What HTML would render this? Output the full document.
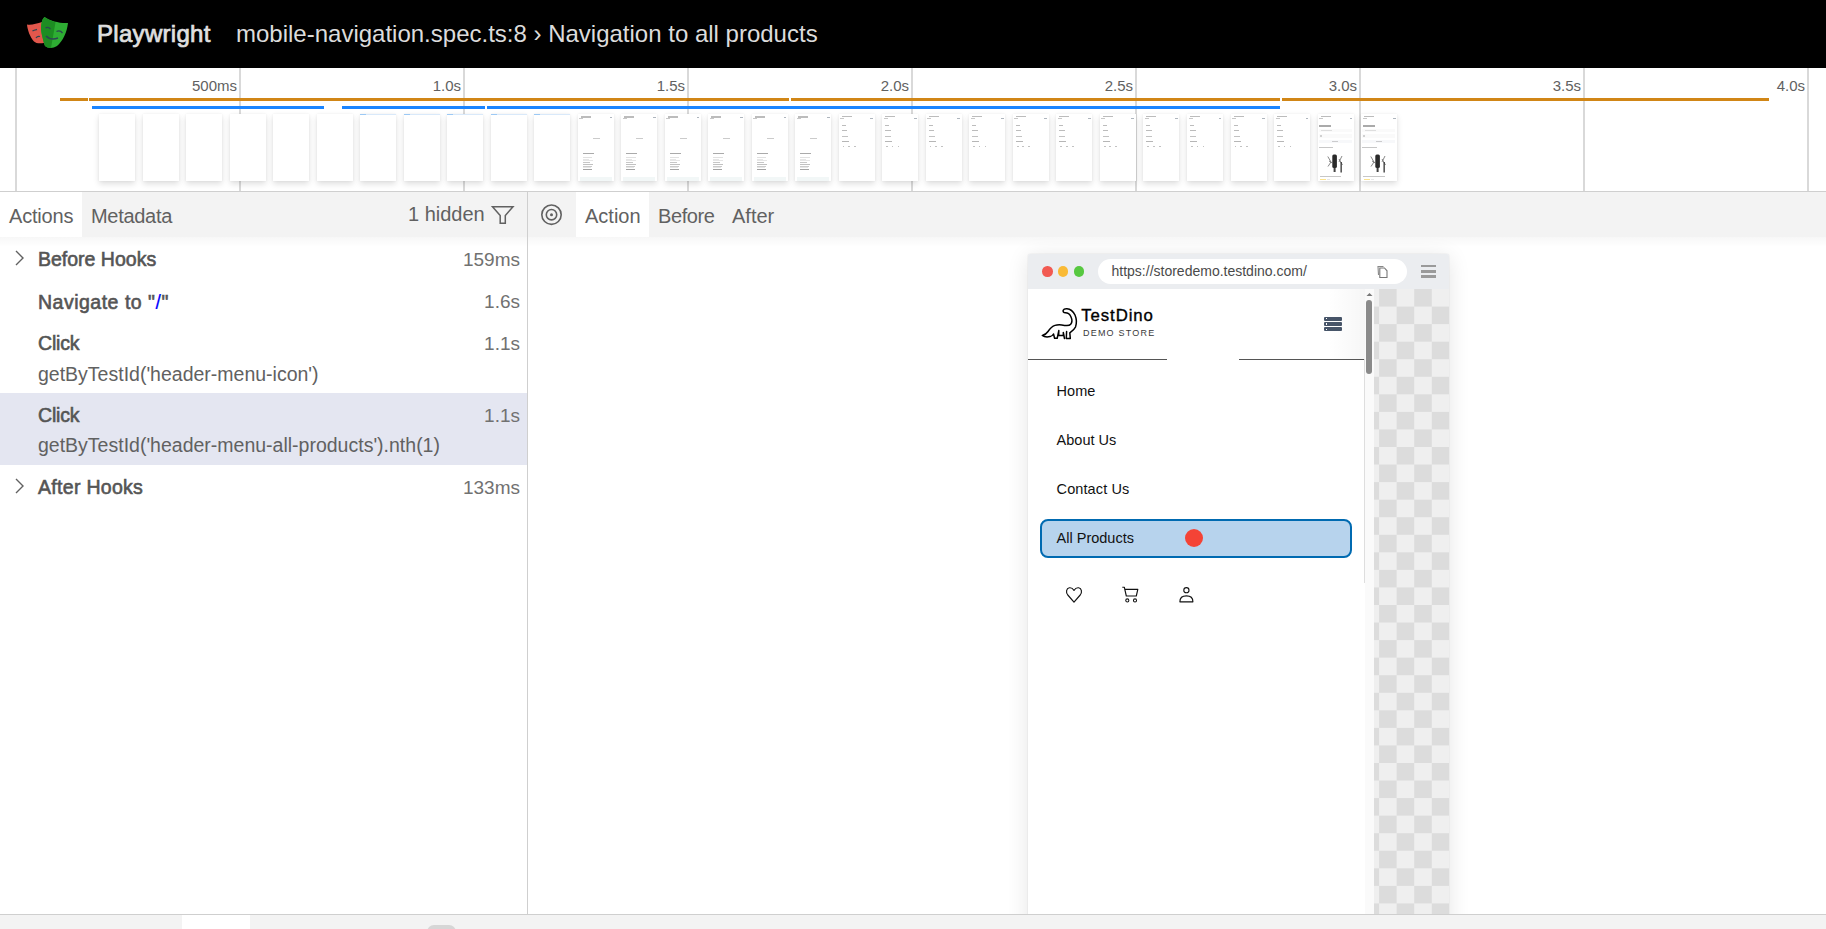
<!DOCTYPE html>
<html><head><meta charset="utf-8">
<style>
*{box-sizing:border-box;margin:0;padding:0}
html,body{width:1826px;height:929px;overflow:hidden;background:#fff;font-family:"Liberation Sans",sans-serif;color:#616161}
.a{position:absolute;white-space:pre;line-height:1}
#hdr{position:absolute;left:0;top:0;width:1826px;height:68px;background:#000}
#tl{position:absolute;left:0;top:68px;width:1826px;height:124px;background:#fff;border-bottom:1px solid #cfcfcf}
.gl{position:absolute;top:68px;width:2px;height:123px;background:#d9d9d9}
.lbl{position:absolute;font-size:15px;line-height:1;top:78px;color:#616161;text-align:right;width:60px}
.ob{position:absolute;top:98px;height:3px;background:#d18616}
.bb{position:absolute;top:106px;height:3px;background:#1a85ff}
.fr{position:absolute;top:114px;width:36px;height:67px;background:#fff;box-shadow:0 3px 6px rgba(0,0,0,.13),0 0 2px rgba(0,0,0,.06);overflow:hidden}
.fr i{position:absolute;display:block;background:#9a9a9a;filter:opacity(.55)}
.tabbar{position:absolute;top:192px;height:45px;background:#f3f3f3}
.tabtxt{position:absolute;font-size:20px;line-height:1;top:206px;color:#616161}
.row{position:absolute;left:0;width:527px}
.t{position:absolute;left:38px;font-size:19.5px;font-weight:400;line-height:1;color:#555;-webkit-text-stroke:0.6px #555}
.s{position:absolute;left:38px;font-size:19.5px;line-height:1;color:#616161}
.d{position:absolute;right:7px;font-size:19px;line-height:1;color:#717171}
.mi{position:absolute;left:1056px;font-size:14.5px;line-height:1;color:#111}
</style></head>
<body>
<!-- HEADER -->
<div id="hdr">
  <svg style="position:absolute;left:0;top:0" width="80" height="68" viewBox="0 0 80 68">
    <path d="M27,24.5 C31,25.5 37,23.5 42,22 L44,43 C40,43.5 36,43.5 34,41.5 C30,37 27.5,30 27,24.5 Z" fill="#e2574c"/>
    <path d="M44.5,17 C50,21 60,23.5 68,23 C67,32 63,41 57,46 C53,48.5 48,48.5 45,46 C43,40 41,32 41,29 C41,24 42,19 44.5,17 Z" fill="#2ead33"/>
    <path d="M44.5,17 C47,19 52,21 55.5,22.3 L51,48 C48.5,48 46.5,47.2 45,46 C43,40 41,32 41,29 C41,24 42,19 44.5,17 Z" fill="#1d8d22"/>
    <path d="M32.5,31 C34,30 35.5,29.8 37,29.5" stroke="#2d4552" stroke-width="1.3" fill="none"/>
    <path d="M36,38 C37,36.5 38.5,36 40,36.5" stroke="#2d4552" stroke-width="1.3" fill="none"/>
    <path d="M45.5,28 C47,27 49,27.5 50.5,29" stroke="#2d4552" stroke-width="1.3" fill="none"/>
    <path d="M56.5,31.5 C58.5,30.5 61,31 62.5,33" stroke="#2d4552" stroke-width="1.3" fill="none"/>
    <path d="M46,36 C49,39 54,39.5 58,38" stroke="#2d4552" stroke-width="1.6" fill="none"/>
  </svg>
  <div class="a" style="left:97px;top:21.7px;font-size:24px;font-weight:400;color:#e0e0e0;letter-spacing:0.3px;-webkit-text-stroke:0.7px #e0e0e0">Playwright</div>
  <div class="a" style="left:236px;top:21.7px;font-size:24px;color:#dcdcdc">mobile-navigation.spec.ts:8 › Navigation to all products</div>
</div>

<!-- TIMELINE -->
<div id="tl"></div>
<div class="gl" style="left:15px"></div>
<div class="gl" style="left:239px"></div>
<div class="gl" style="left:463px"></div>
<div class="gl" style="left:687px"></div>
<div class="gl" style="left:911px"></div>
<div class="gl" style="left:1135px"></div>
<div class="gl" style="left:1359px"></div>
<div class="gl" style="left:1583px"></div>
<div class="gl" style="left:1807px"></div>
<div class="lbl" style="left:177px">500ms</div>
<div class="lbl" style="left:401px">1.0s</div>
<div class="lbl" style="left:625px">1.5s</div>
<div class="lbl" style="left:849px">2.0s</div>
<div class="lbl" style="left:1073px">2.5s</div>
<div class="lbl" style="left:1297px">3.0s</div>
<div class="lbl" style="left:1521px">3.5s</div>
<div class="lbl" style="left:1745px">4.0s</div>
<div class="ob" style="left:60px;width:28px"></div>
<div class="ob" style="left:89px;width:700px"></div>
<div class="ob" style="left:791px;width:489px"></div>
<div class="ob" style="left:1282px;width:487px"></div>
<div class="bb" style="left:92px;width:232px"></div>
<div class="bb" style="left:342px;width:143px"></div>
<div class="bb" style="left:487px;width:793px"></div>
<div id="frames"><div class="fr" style="left:99.00px"></div><div class="fr" style="left:142.52px"></div><div class="fr" style="left:186.04px"></div><div class="fr" style="left:229.56px"></div><div class="fr" style="left:273.08px"></div><div class="fr" style="left:316.60px"></div><div class="fr" style="left:360.12px"><i style="left:0px;top:0px;width:36px;height:0.8px;background:#b9d7f5;opacity:1"></i><i style="left:0px;top:0px;width:6px;height:0.8px;background:#6aaef0;opacity:1"></i></div><div class="fr" style="left:403.64px"><i style="left:0px;top:0px;width:36px;height:0.8px;background:#b9d7f5;opacity:1"></i><i style="left:0px;top:0px;width:6px;height:0.8px;background:#6aaef0;opacity:1"></i></div><div class="fr" style="left:447.16px"><i style="left:0px;top:0px;width:36px;height:0.8px;background:#b9d7f5;opacity:1"></i><i style="left:0px;top:0px;width:6px;height:0.8px;background:#6aaef0;opacity:1"></i></div><div class="fr" style="left:490.68px"><i style="left:0px;top:0px;width:36px;height:0.8px;background:#b9d7f5;opacity:1"></i><i style="left:0px;top:0px;width:6px;height:0.8px;background:#6aaef0;opacity:1"></i></div><div class="fr" style="left:534.20px"><i style="left:0px;top:0px;width:36px;height:0.8px;background:#b9d7f5;opacity:1"></i><i style="left:0px;top:0px;width:6px;height:0.8px;background:#6aaef0;opacity:1"></i></div><div class="fr" style="left:577.72px"><i style="left:3px;top:2.4px;width:10px;height:1.2px;background:#333;opacity:0.6"></i><i style="left:1.5px;top:3.8px;width:4px;height:1px;background:#333;opacity:0.5"></i><i style="left:32px;top:3.2px;width:2.6px;height:1.3px;background:#475569;opacity:0.8"></i><i style="left:15px;top:23.8px;width:7px;height:1px;background:#444;opacity:0.5"></i><i style="left:5px;top:39.4px;width:11px;height:1px;background:#222;opacity:0.7"></i><i style="left:5px;top:43.2px;width:9.5px;height:0.8px;background:#666;opacity:0.35"></i><i style="left:5px;top:45.2px;width:6px;height:0.7px;background:#666;opacity:0.3"></i><i style="left:5px;top:46.2px;width:10px;height:0.7px;background:#666;opacity:0.3"></i><i style="left:5px;top:47.9px;width:7px;height:0.8px;background:#333;opacity:0.5"></i><i style="left:5px;top:49.8px;width:10px;height:0.8px;background:#333;opacity:0.55"></i><i style="left:5px;top:51.7px;width:9px;height:0.8px;background:#333;opacity:0.45"></i><i style="left:5px;top:53.3px;width:8px;height:0.7px;background:#666;opacity:0.3"></i><i style="left:5px;top:55.4px;width:9px;height:0.9px;background:#111;opacity:0.7"></i><i style="left:2px;top:63px;width:32px;height:4px;background:#e8f1f1;opacity:1"></i></div><div class="fr" style="left:621.24px"><i style="left:3px;top:2.4px;width:10px;height:1.2px;background:#333;opacity:0.6"></i><i style="left:1.5px;top:3.8px;width:4px;height:1px;background:#333;opacity:0.5"></i><i style="left:32px;top:3.2px;width:2.6px;height:1.3px;background:#475569;opacity:0.8"></i><i style="left:15px;top:23.8px;width:7px;height:1px;background:#444;opacity:0.5"></i><i style="left:5px;top:39.4px;width:11px;height:1px;background:#222;opacity:0.7"></i><i style="left:5px;top:43.2px;width:9.5px;height:0.8px;background:#666;opacity:0.35"></i><i style="left:5px;top:45.2px;width:6px;height:0.7px;background:#666;opacity:0.3"></i><i style="left:5px;top:46.2px;width:10px;height:0.7px;background:#666;opacity:0.3"></i><i style="left:5px;top:47.9px;width:7px;height:0.8px;background:#333;opacity:0.5"></i><i style="left:5px;top:49.8px;width:10px;height:0.8px;background:#333;opacity:0.55"></i><i style="left:5px;top:51.7px;width:9px;height:0.8px;background:#333;opacity:0.45"></i><i style="left:5px;top:53.3px;width:8px;height:0.7px;background:#666;opacity:0.3"></i><i style="left:5px;top:55.4px;width:9px;height:0.9px;background:#111;opacity:0.7"></i><i style="left:2px;top:63px;width:32px;height:4px;background:#e8f1f1;opacity:1"></i></div><div class="fr" style="left:664.76px"><i style="left:3px;top:2.4px;width:10px;height:1.2px;background:#333;opacity:0.6"></i><i style="left:1.5px;top:3.8px;width:4px;height:1px;background:#333;opacity:0.5"></i><i style="left:32px;top:3.2px;width:2.6px;height:1.3px;background:#475569;opacity:0.8"></i><i style="left:15px;top:23.8px;width:7px;height:1px;background:#444;opacity:0.5"></i><i style="left:5px;top:39.4px;width:11px;height:1px;background:#222;opacity:0.7"></i><i style="left:5px;top:43.2px;width:9.5px;height:0.8px;background:#666;opacity:0.35"></i><i style="left:5px;top:45.2px;width:6px;height:0.7px;background:#666;opacity:0.3"></i><i style="left:5px;top:46.2px;width:10px;height:0.7px;background:#666;opacity:0.3"></i><i style="left:5px;top:47.9px;width:7px;height:0.8px;background:#333;opacity:0.5"></i><i style="left:5px;top:49.8px;width:10px;height:0.8px;background:#333;opacity:0.55"></i><i style="left:5px;top:51.7px;width:9px;height:0.8px;background:#333;opacity:0.45"></i><i style="left:5px;top:53.3px;width:8px;height:0.7px;background:#666;opacity:0.3"></i><i style="left:5px;top:55.4px;width:9px;height:0.9px;background:#111;opacity:0.7"></i><i style="left:2px;top:63px;width:32px;height:4px;background:#e8f1f1;opacity:1"></i></div><div class="fr" style="left:708.28px"><i style="left:3px;top:2.4px;width:10px;height:1.2px;background:#333;opacity:0.6"></i><i style="left:1.5px;top:3.8px;width:4px;height:1px;background:#333;opacity:0.5"></i><i style="left:32px;top:3.2px;width:2.6px;height:1.3px;background:#475569;opacity:0.8"></i><i style="left:15px;top:23.8px;width:7px;height:1px;background:#444;opacity:0.5"></i><i style="left:5px;top:39.4px;width:11px;height:1px;background:#222;opacity:0.7"></i><i style="left:5px;top:43.2px;width:9.5px;height:0.8px;background:#666;opacity:0.35"></i><i style="left:5px;top:45.2px;width:6px;height:0.7px;background:#666;opacity:0.3"></i><i style="left:5px;top:46.2px;width:10px;height:0.7px;background:#666;opacity:0.3"></i><i style="left:5px;top:47.9px;width:7px;height:0.8px;background:#333;opacity:0.5"></i><i style="left:5px;top:49.8px;width:10px;height:0.8px;background:#333;opacity:0.55"></i><i style="left:5px;top:51.7px;width:9px;height:0.8px;background:#333;opacity:0.45"></i><i style="left:5px;top:53.3px;width:8px;height:0.7px;background:#666;opacity:0.3"></i><i style="left:5px;top:55.4px;width:9px;height:0.9px;background:#111;opacity:0.7"></i><i style="left:2px;top:63px;width:32px;height:4px;background:#e8f1f1;opacity:1"></i></div><div class="fr" style="left:751.80px"><i style="left:3px;top:2.4px;width:10px;height:1.2px;background:#333;opacity:0.6"></i><i style="left:1.5px;top:3.8px;width:4px;height:1px;background:#333;opacity:0.5"></i><i style="left:32px;top:3.2px;width:2.6px;height:1.3px;background:#475569;opacity:0.8"></i><i style="left:15px;top:23.8px;width:7px;height:1px;background:#444;opacity:0.5"></i><i style="left:5px;top:39.4px;width:11px;height:1px;background:#222;opacity:0.7"></i><i style="left:5px;top:43.2px;width:9.5px;height:0.8px;background:#666;opacity:0.35"></i><i style="left:5px;top:45.2px;width:6px;height:0.7px;background:#666;opacity:0.3"></i><i style="left:5px;top:46.2px;width:10px;height:0.7px;background:#666;opacity:0.3"></i><i style="left:5px;top:47.9px;width:7px;height:0.8px;background:#333;opacity:0.5"></i><i style="left:5px;top:49.8px;width:10px;height:0.8px;background:#333;opacity:0.55"></i><i style="left:5px;top:51.7px;width:9px;height:0.8px;background:#333;opacity:0.45"></i><i style="left:5px;top:53.3px;width:8px;height:0.7px;background:#666;opacity:0.3"></i><i style="left:5px;top:55.4px;width:9px;height:0.9px;background:#111;opacity:0.7"></i><i style="left:2px;top:63px;width:32px;height:4px;background:#e8f1f1;opacity:1"></i></div><div class="fr" style="left:795.32px"><i style="left:3px;top:2.4px;width:10px;height:1.2px;background:#333;opacity:0.6"></i><i style="left:1.5px;top:3.8px;width:4px;height:1px;background:#333;opacity:0.5"></i><i style="left:32px;top:3.2px;width:2.6px;height:1.3px;background:#475569;opacity:0.8"></i><i style="left:15px;top:23.8px;width:7px;height:1px;background:#444;opacity:0.5"></i><i style="left:5px;top:39.4px;width:11px;height:1px;background:#222;opacity:0.7"></i><i style="left:5px;top:43.2px;width:9.5px;height:0.8px;background:#666;opacity:0.35"></i><i style="left:5px;top:45.2px;width:6px;height:0.7px;background:#666;opacity:0.3"></i><i style="left:5px;top:46.2px;width:10px;height:0.7px;background:#666;opacity:0.3"></i><i style="left:5px;top:47.9px;width:7px;height:0.8px;background:#333;opacity:0.5"></i><i style="left:5px;top:49.8px;width:10px;height:0.8px;background:#333;opacity:0.55"></i><i style="left:5px;top:51.7px;width:9px;height:0.8px;background:#333;opacity:0.45"></i><i style="left:5px;top:53.3px;width:8px;height:0.7px;background:#666;opacity:0.3"></i><i style="left:5px;top:55.4px;width:9px;height:0.9px;background:#111;opacity:0.7"></i><i style="left:2px;top:63px;width:32px;height:4px;background:#e8f1f1;opacity:1"></i></div><div class="fr" style="left:838.84px"><i style="left:3px;top:2.2px;width:10px;height:1.2px;background:#333;opacity:0.6"></i><i style="left:1.5px;top:3.6px;width:4px;height:1px;background:#333;opacity:0.5"></i><i style="left:31.5px;top:3.5px;width:2.8px;height:1.3px;background:#475569;opacity:0.8"></i><i style="left:3px;top:11px;width:4px;height:1px;background:#222;opacity:0.55"></i><i style="left:3px;top:16.3px;width:5.5px;height:1px;background:#222;opacity:0.55"></i><i style="left:3px;top:21.5px;width:6px;height:1px;background:#222;opacity:0.5"></i><i style="left:3px;top:26.7px;width:7px;height:1px;background:#222;opacity:0.6"></i><i style="left:4px;top:32px;width:1.6px;height:1.4px;background:#222;opacity:0.5"></i><i style="left:9.5px;top:32px;width:1.6px;height:1.4px;background:#222;opacity:0.5"></i><i style="left:15.5px;top:32px;width:1.6px;height:1.4px;background:#222;opacity:0.5"></i></div><div class="fr" style="left:882.36px"><i style="left:3px;top:2.2px;width:10px;height:1.2px;background:#333;opacity:0.6"></i><i style="left:1.5px;top:3.6px;width:4px;height:1px;background:#333;opacity:0.5"></i><i style="left:31.5px;top:3.5px;width:2.8px;height:1.3px;background:#475569;opacity:0.8"></i><i style="left:3px;top:11px;width:4px;height:1px;background:#222;opacity:0.55"></i><i style="left:3px;top:16.3px;width:5.5px;height:1px;background:#222;opacity:0.55"></i><i style="left:3px;top:21.5px;width:6px;height:1px;background:#222;opacity:0.5"></i><i style="left:3px;top:26.7px;width:7px;height:1px;background:#222;opacity:0.6"></i><i style="left:4px;top:32px;width:1.6px;height:1.4px;background:#222;opacity:0.5"></i><i style="left:9.5px;top:32px;width:1.6px;height:1.4px;background:#222;opacity:0.5"></i><i style="left:15.5px;top:32px;width:1.6px;height:1.4px;background:#222;opacity:0.5"></i></div><div class="fr" style="left:925.88px"><i style="left:3px;top:2.2px;width:10px;height:1.2px;background:#333;opacity:0.6"></i><i style="left:1.5px;top:3.6px;width:4px;height:1px;background:#333;opacity:0.5"></i><i style="left:31.5px;top:3.5px;width:2.8px;height:1.3px;background:#475569;opacity:0.8"></i><i style="left:3px;top:11px;width:4px;height:1px;background:#222;opacity:0.55"></i><i style="left:3px;top:16.3px;width:5.5px;height:1px;background:#222;opacity:0.55"></i><i style="left:3px;top:21.5px;width:6px;height:1px;background:#222;opacity:0.5"></i><i style="left:3px;top:26.7px;width:7px;height:1px;background:#222;opacity:0.6"></i><i style="left:4px;top:32px;width:1.6px;height:1.4px;background:#222;opacity:0.5"></i><i style="left:9.5px;top:32px;width:1.6px;height:1.4px;background:#222;opacity:0.5"></i><i style="left:15.5px;top:32px;width:1.6px;height:1.4px;background:#222;opacity:0.5"></i></div><div class="fr" style="left:969.40px"><i style="left:3px;top:2.2px;width:10px;height:1.2px;background:#333;opacity:0.6"></i><i style="left:1.5px;top:3.6px;width:4px;height:1px;background:#333;opacity:0.5"></i><i style="left:31.5px;top:3.5px;width:2.8px;height:1.3px;background:#475569;opacity:0.8"></i><i style="left:3px;top:11px;width:4px;height:1px;background:#222;opacity:0.55"></i><i style="left:3px;top:16.3px;width:5.5px;height:1px;background:#222;opacity:0.55"></i><i style="left:3px;top:21.5px;width:6px;height:1px;background:#222;opacity:0.5"></i><i style="left:3px;top:26.7px;width:7px;height:1px;background:#222;opacity:0.6"></i><i style="left:4px;top:32px;width:1.6px;height:1.4px;background:#222;opacity:0.5"></i><i style="left:9.5px;top:32px;width:1.6px;height:1.4px;background:#222;opacity:0.5"></i><i style="left:15.5px;top:32px;width:1.6px;height:1.4px;background:#222;opacity:0.5"></i></div><div class="fr" style="left:1012.92px"><i style="left:3px;top:2.2px;width:10px;height:1.2px;background:#333;opacity:0.6"></i><i style="left:1.5px;top:3.6px;width:4px;height:1px;background:#333;opacity:0.5"></i><i style="left:31.5px;top:3.5px;width:2.8px;height:1.3px;background:#475569;opacity:0.8"></i><i style="left:3px;top:11px;width:4px;height:1px;background:#222;opacity:0.55"></i><i style="left:3px;top:16.3px;width:5.5px;height:1px;background:#222;opacity:0.55"></i><i style="left:3px;top:21.5px;width:6px;height:1px;background:#222;opacity:0.5"></i><i style="left:3px;top:26.7px;width:7px;height:1px;background:#222;opacity:0.6"></i><i style="left:4px;top:32px;width:1.6px;height:1.4px;background:#222;opacity:0.5"></i><i style="left:9.5px;top:32px;width:1.6px;height:1.4px;background:#222;opacity:0.5"></i><i style="left:15.5px;top:32px;width:1.6px;height:1.4px;background:#222;opacity:0.5"></i></div><div class="fr" style="left:1056.44px"><i style="left:3px;top:2.2px;width:10px;height:1.2px;background:#333;opacity:0.6"></i><i style="left:1.5px;top:3.6px;width:4px;height:1px;background:#333;opacity:0.5"></i><i style="left:31.5px;top:3.5px;width:2.8px;height:1.3px;background:#475569;opacity:0.8"></i><i style="left:3px;top:11px;width:4px;height:1px;background:#222;opacity:0.55"></i><i style="left:3px;top:16.3px;width:5.5px;height:1px;background:#222;opacity:0.55"></i><i style="left:3px;top:21.5px;width:6px;height:1px;background:#222;opacity:0.5"></i><i style="left:3px;top:26.7px;width:7px;height:1px;background:#222;opacity:0.6"></i><i style="left:4px;top:32px;width:1.6px;height:1.4px;background:#222;opacity:0.5"></i><i style="left:9.5px;top:32px;width:1.6px;height:1.4px;background:#222;opacity:0.5"></i><i style="left:15.5px;top:32px;width:1.6px;height:1.4px;background:#222;opacity:0.5"></i></div><div class="fr" style="left:1099.96px"><i style="left:3px;top:2.2px;width:10px;height:1.2px;background:#333;opacity:0.6"></i><i style="left:1.5px;top:3.6px;width:4px;height:1px;background:#333;opacity:0.5"></i><i style="left:31.5px;top:3.5px;width:2.8px;height:1.3px;background:#475569;opacity:0.8"></i><i style="left:3px;top:11px;width:4px;height:1px;background:#222;opacity:0.55"></i><i style="left:3px;top:16.3px;width:5.5px;height:1px;background:#222;opacity:0.55"></i><i style="left:3px;top:21.5px;width:6px;height:1px;background:#222;opacity:0.5"></i><i style="left:3px;top:26.7px;width:7px;height:1px;background:#222;opacity:0.6"></i><i style="left:4px;top:32px;width:1.6px;height:1.4px;background:#222;opacity:0.5"></i><i style="left:9.5px;top:32px;width:1.6px;height:1.4px;background:#222;opacity:0.5"></i><i style="left:15.5px;top:32px;width:1.6px;height:1.4px;background:#222;opacity:0.5"></i></div><div class="fr" style="left:1143.48px"><i style="left:3px;top:2.2px;width:10px;height:1.2px;background:#333;opacity:0.6"></i><i style="left:1.5px;top:3.6px;width:4px;height:1px;background:#333;opacity:0.5"></i><i style="left:31.5px;top:3.5px;width:2.8px;height:1.3px;background:#475569;opacity:0.8"></i><i style="left:3px;top:11px;width:4px;height:1px;background:#222;opacity:0.55"></i><i style="left:3px;top:16.3px;width:5.5px;height:1px;background:#222;opacity:0.55"></i><i style="left:3px;top:21.5px;width:6px;height:1px;background:#222;opacity:0.5"></i><i style="left:3px;top:26.7px;width:7px;height:1px;background:#222;opacity:0.6"></i><i style="left:4px;top:32px;width:1.6px;height:1.4px;background:#222;opacity:0.5"></i><i style="left:9.5px;top:32px;width:1.6px;height:1.4px;background:#222;opacity:0.5"></i><i style="left:15.5px;top:32px;width:1.6px;height:1.4px;background:#222;opacity:0.5"></i></div><div class="fr" style="left:1187.00px"><i style="left:3px;top:2.2px;width:10px;height:1.2px;background:#333;opacity:0.6"></i><i style="left:1.5px;top:3.6px;width:4px;height:1px;background:#333;opacity:0.5"></i><i style="left:31.5px;top:3.5px;width:2.8px;height:1.3px;background:#475569;opacity:0.8"></i><i style="left:3px;top:11px;width:4px;height:1px;background:#222;opacity:0.55"></i><i style="left:3px;top:16.3px;width:5.5px;height:1px;background:#222;opacity:0.55"></i><i style="left:3px;top:21.5px;width:6px;height:1px;background:#222;opacity:0.5"></i><i style="left:3px;top:26.7px;width:7px;height:1px;background:#222;opacity:0.6"></i><i style="left:4px;top:32px;width:1.6px;height:1.4px;background:#222;opacity:0.5"></i><i style="left:9.5px;top:32px;width:1.6px;height:1.4px;background:#222;opacity:0.5"></i><i style="left:15.5px;top:32px;width:1.6px;height:1.4px;background:#222;opacity:0.5"></i></div><div class="fr" style="left:1230.52px"><i style="left:3px;top:2.2px;width:10px;height:1.2px;background:#333;opacity:0.6"></i><i style="left:1.5px;top:3.6px;width:4px;height:1px;background:#333;opacity:0.5"></i><i style="left:31.5px;top:3.5px;width:2.8px;height:1.3px;background:#475569;opacity:0.8"></i><i style="left:3px;top:11px;width:4px;height:1px;background:#222;opacity:0.55"></i><i style="left:3px;top:16.3px;width:5.5px;height:1px;background:#222;opacity:0.55"></i><i style="left:3px;top:21.5px;width:6px;height:1px;background:#222;opacity:0.5"></i><i style="left:3px;top:26.7px;width:7px;height:1px;background:#222;opacity:0.6"></i><i style="left:4px;top:32px;width:1.6px;height:1.4px;background:#222;opacity:0.5"></i><i style="left:9.5px;top:32px;width:1.6px;height:1.4px;background:#222;opacity:0.5"></i><i style="left:15.5px;top:32px;width:1.6px;height:1.4px;background:#222;opacity:0.5"></i></div><div class="fr" style="left:1274.04px"><i style="left:3px;top:2.2px;width:10px;height:1.2px;background:#333;opacity:0.6"></i><i style="left:1.5px;top:3.6px;width:4px;height:1px;background:#333;opacity:0.5"></i><i style="left:31.5px;top:3.5px;width:2.8px;height:1.3px;background:#475569;opacity:0.8"></i><i style="left:3px;top:11px;width:4px;height:1px;background:#222;opacity:0.55"></i><i style="left:3px;top:16.3px;width:5.5px;height:1px;background:#222;opacity:0.55"></i><i style="left:3px;top:21.5px;width:6px;height:1px;background:#222;opacity:0.5"></i><i style="left:3px;top:26.7px;width:7px;height:1px;background:#222;opacity:0.6"></i><i style="left:4px;top:32px;width:1.6px;height:1.4px;background:#222;opacity:0.5"></i><i style="left:9.5px;top:32px;width:1.6px;height:1.4px;background:#222;opacity:0.5"></i><i style="left:15.5px;top:32px;width:1.6px;height:1.4px;background:#222;opacity:0.5"></i></div><div class="fr" style="left:1317.56px"><i style="left:3px;top:2.2px;width:10px;height:1.2px;background:#333;opacity:0.6"></i><i style="left:1.5px;top:3.6px;width:4px;height:1px;background:#333;opacity:0.5"></i><i style="left:32px;top:3.5px;width:2.6px;height:1.3px;background:#475569;opacity:0.8"></i><i style="left:1.6px;top:10.8px;width:12.3px;height:1.8px;background:#222;opacity:0.7"></i><i style="left:1.2px;top:14.8px;width:33px;height:3.7px;background:#f6f6f6;opacity:1"></i><i style="left:3.5px;top:16.3px;width:11px;height:0.8px;background:#888;opacity:0.45"></i><i style="left:1.2px;top:20.1px;width:33px;height:3.7px;background:#f6f6f6;opacity:1"></i><i style="left:2.3px;top:21px;width:1.8px;height:1.8px;background:#666;opacity:0.5"></i><i style="left:1.2px;top:25.8px;width:33px;height:3.3px;background:#f1f3f5;opacity:1"></i><i style="left:14.5px;top:27px;width:6px;height:0.9px;background:#555;opacity:0.5"></i><i style="left:1.2px;top:33px;width:14.3px;height:0.9px;background:#333;opacity:0.5"></i><svg style="position:absolute;left:8px;top:39px" width="20" height="21" viewBox="0 0 20 21"><rect x="6.3" y="1.5" width="4.6" height="13.5" rx="1.5" fill="#2a2a2a"/><rect x="7.6" y="15" width="2" height="4" fill="#444"/><path d="M1.8,3.5 L5,9 L2,13.5 M3,8 L6.3,10" stroke="#555" stroke-width=".7" fill="none"/><path d="M16,3 L13,9 M13,6 L16.5,12" stroke="#555" stroke-width=".7" fill="none"/><rect x="14.5" y="9" width="1.3" height="10.5" fill="#333"/></svg><i style="left:2.4px;top:62.3px;width:21.3px;height:1.1px;background:#333;opacity:0.5"></i><i style="left:2.8px;top:65px;width:6px;height:1.2px;background:#f5c518;opacity:0.9"></i><i style="left:9.5px;top:65.2px;width:3px;height:0.9px;background:#aaa;opacity:0.5"></i></div><div class="fr" style="left:1361.08px"><i style="left:3px;top:2.2px;width:10px;height:1.2px;background:#333;opacity:0.6"></i><i style="left:1.5px;top:3.6px;width:4px;height:1px;background:#333;opacity:0.5"></i><i style="left:32px;top:3.5px;width:2.6px;height:1.3px;background:#475569;opacity:0.8"></i><i style="left:1.6px;top:10.8px;width:12.3px;height:1.8px;background:#222;opacity:0.7"></i><i style="left:1.2px;top:14.8px;width:33px;height:3.7px;background:#f6f6f6;opacity:1"></i><i style="left:3.5px;top:16.3px;width:11px;height:0.8px;background:#888;opacity:0.45"></i><i style="left:1.2px;top:20.1px;width:33px;height:3.7px;background:#f6f6f6;opacity:1"></i><i style="left:2.3px;top:21px;width:1.8px;height:1.8px;background:#666;opacity:0.5"></i><i style="left:1.2px;top:25.8px;width:33px;height:3.3px;background:#f1f3f5;opacity:1"></i><i style="left:14.5px;top:27px;width:6px;height:0.9px;background:#555;opacity:0.5"></i><i style="left:1.2px;top:33px;width:14.3px;height:0.9px;background:#333;opacity:0.5"></i><svg style="position:absolute;left:8px;top:39px" width="20" height="21" viewBox="0 0 20 21"><rect x="6.3" y="1.5" width="4.6" height="13.5" rx="1.5" fill="#2a2a2a"/><rect x="7.6" y="15" width="2" height="4" fill="#444"/><path d="M1.8,3.5 L5,9 L2,13.5 M3,8 L6.3,10" stroke="#555" stroke-width=".7" fill="none"/><path d="M16,3 L13,9 M13,6 L16.5,12" stroke="#555" stroke-width=".7" fill="none"/><rect x="14.5" y="9" width="1.3" height="10.5" fill="#333"/></svg><i style="left:2.4px;top:62.3px;width:21.3px;height:1.1px;background:#333;opacity:0.5"></i><i style="left:2.8px;top:65px;width:6px;height:1.2px;background:#f5c518;opacity:0.9"></i><i style="left:9.5px;top:65.2px;width:3px;height:0.9px;background:#aaa;opacity:0.5"></i></div></div>

<!-- LEFT TAB BAR -->
<div class="tabbar" style="left:0;width:527px"></div>
<div style="position:absolute;left:0;top:192px;width:82px;height:45px;background:#fff"></div>
<div class="tabtxt" style="left:9px;letter-spacing:-0.2px">Actions</div>
<div class="tabtxt" style="left:91px;letter-spacing:-0.3px">Metadata</div>
<div class="tabtxt" style="left:408px;top:204px">1 hidden</div>
<svg style="position:absolute;left:488px;top:202px" width="30" height="26" viewBox="0 0 30 26">
  <path d="M4.5,4.8 L25,4.8 L17.3,13.5 L17.3,21.2 L12.2,21.2 L12.2,13.5 Z" fill="none" stroke="#616161" stroke-width="1.5" stroke-linejoin="miter"/>
</svg>
<div style="position:absolute;left:0;top:237px;width:1826px;height:10px;background:linear-gradient(rgba(0,0,0,.03),rgba(0,0,0,0))"></div>
<div style="position:absolute;left:527px;top:192px;width:1px;height:722px;background:#cfcfcf"></div>

<!-- ACTION LIST -->
<svg style="position:absolute;left:12px;top:248px" width="16" height="20" viewBox="0 0 16 20"><path d="M4,3 L11,10 L4,17" fill="none" stroke="#616161" stroke-width="1.4"/></svg>
<div class="t" style="top:250.3px;letter-spacing:0px">Before Hooks</div>
<div class="d" style="left:auto;right:auto;top:250px;width:520px;text-align:right;left:0">159ms</div>
<div class="t" style="top:292.5px;letter-spacing:0.5px">Navigate to "<span style="color:#0000ff;-webkit-text-stroke:0.2px #00f">/</span>"</div>
<div class="d" style="top:292px;width:520px;text-align:right;left:0">1.6s</div>
<div class="t" style="top:334.3px;letter-spacing:-0.2px">Click</div>
<div class="d" style="top:334px;width:520px;text-align:right;left:0">1.1s</div>
<div class="s" style="top:364.5px">getByTestId('header-menu-icon')</div>
<div style="position:absolute;left:0;top:393px;width:527px;height:72px;background:#e4e6f1"></div>
<div class="t" style="top:406.3px;letter-spacing:-0.2px">Click</div>
<div class="d" style="top:406px;width:520px;text-align:right;left:0">1.1s</div>
<div class="s" style="top:436px">getByTestId('header-menu-all-products').nth(1)</div>
<svg style="position:absolute;left:12px;top:476px" width="16" height="20" viewBox="0 0 16 20"><path d="M4,3 L11,10 L4,17" fill="none" stroke="#616161" stroke-width="1.4"/></svg>
<div class="t" style="top:478px;letter-spacing:0.3px">After Hooks</div>
<div class="d" style="top:477.5px;width:520px;text-align:right;left:0">133ms</div>

<!-- RIGHT TAB BAR -->
<div class="tabbar" style="left:528px;width:1298px"></div>
<svg style="position:absolute;left:539px;top:202px" width="26" height="26" viewBox="0 0 26 26">
  <circle cx="12.5" cy="12.7" r="9.7" fill="none" stroke="#616161" stroke-width="1.6"/>
  <circle cx="12.5" cy="12.7" r="5.2" fill="none" stroke="#616161" stroke-width="1.6"/>
  <circle cx="12.5" cy="12.7" r="1.5" fill="#616161"/>
</svg>
<div style="position:absolute;left:576px;top:192px;width:73px;height:45px;background:#fff"></div>
<div class="tabtxt" style="left:585px">Action</div>
<div class="tabtxt" style="left:658px;letter-spacing:-0.4px">Before</div>
<div class="tabtxt" style="left:732px">After</div>

<!-- BROWSER FRAME -->
<div id="bf" style="position:absolute;left:1028px;top:254px;width:421px;height:700px;box-shadow:0 0 1.5px rgba(0,0,0,.14),0 3px 22px rgba(0,0,0,.11);border-radius:2px 2px 0 0;overflow:hidden;background:#fff">
  <div style="position:absolute;left:0;top:0;width:421px;height:35px;background:#ebedf0"></div>
  <div style="position:absolute;left:14px;top:12px;width:10.5px;height:10.5px;border-radius:50%;background:#f25a52"></div>
  <div style="position:absolute;left:29.8px;top:12px;width:10.5px;height:10.5px;border-radius:50%;background:#f9ba36"></div>
  <div style="position:absolute;left:45.6px;top:12px;width:10.5px;height:10.5px;border-radius:50%;background:#57c840"></div>
  <div style="position:absolute;left:70px;top:5px;width:309px;height:25px;border-radius:13px;background:#fff"></div>
  <div class="a" style="left:83.5px;top:10px;font-size:14px;color:#4a4a4a">https://storedemo.testdino.com/</div>
  <svg style="position:absolute;left:347px;top:10px" width="16" height="16" viewBox="0 0 16 16">
    <path d="M3.5,11 L3,2.5 L8.5,2.5" fill="none" stroke="#888" stroke-width="1.1"/>
    <path d="M4.8,4 L9.5,4 L12,6.8 L12,13.5 L4.8,13.5 Z" fill="none" stroke="#777" stroke-width="1.1"/>
  </svg>
  <div style="position:absolute;left:392.7px;top:10.8px;width:15.3px;height:2.7px;background:#9a9a9a"></div>
  <div style="position:absolute;left:392.7px;top:16.1px;width:15.3px;height:2.7px;background:#9a9a9a"></div>
  <div style="position:absolute;left:392.7px;top:21.3px;width:15.3px;height:2.7px;background:#9a9a9a"></div>
  <!-- viewport -->
  <div id="vp" style="position:absolute;left:0;top:35px;width:421px;height:665px;background-color:#efefef;background-image:conic-gradient(#efefef 25%,#dcdcdc 0 50%,#efefef 0 75%,#dcdcdc 0);background-size:35.12px 35.12px;background-position:0 0"></div>
</div>
<div id="page" style="position:absolute;left:1028px;top:289px;width:346px;height:625px;background:#fff;overflow:hidden">
  <svg style="position:absolute;left:12px;top:17px" width="40" height="36" viewBox="0 0 40 36">
    <path d="M25.4,6.8 C23.5,6.8 22.8,5.5 23.2,4.2 C23.8,2.8 25.5,2.6 27,2.7 C30,2.9 33,5 35,9 C36.5,12.5 36.8,17 35.5,21 C34.5,23.5 32.5,25 29.8,26.8 L30.3,32.5 L26.3,32.6 L26.6,25.5 M25.4,6.8 C27.5,6.8 29.5,7.8 30.8,10.5 C32,13 32.2,16.5 30.7,18.2 C29.5,19.7 27.5,19.9 24.5,19.4 C21,18.7 18,18.5 15,19.4 C12,20.3 10,22.5 8,25.5 C6.5,27.8 4.5,29 2.3,29.4 C4,30.8 7,31.2 10,30.6 C11.5,30.2 12.7,29.5 13.5,28 L14.6,32.3 L17.2,32.3 L18.8,24.6 L18.7,29.6 L23.4,29.6 L23.3,26.5 L24.5,32.5" fill="none" stroke="#000" stroke-width="1.5" stroke-linejoin="round" stroke-linecap="round"/>
  </svg>
  <div class="a" style="left:53.3px;top:19.3px;font-size:16.8px;color:#000;letter-spacing:0.9px;-webkit-text-stroke:0.35px #000">TestDino</div>
  <div class="a" style="left:55px;top:39.7px;font-size:9px;color:#3a3a3a;letter-spacing:1.2px">DEMO STORE</div>
  <div style="position:absolute;left:296px;top:28px;width:18px;height:3.6px;background:#475569;border-radius:1px"></div>
  <div style="position:absolute;left:296px;top:33.2px;width:18px;height:3.6px;background:#475569;border-radius:1px"></div>
  <div style="position:absolute;left:296px;top:38.4px;width:18px;height:3.6px;background:#475569;border-radius:1px"></div>
  <div style="position:absolute;left:297.5px;top:29.2px;width:1.5px;height:1.3px;background:#fff"></div>
  <div style="position:absolute;left:297.5px;top:34.4px;width:1.5px;height:1.3px;background:#fff"></div>
  <div style="position:absolute;left:297.5px;top:39.6px;width:1.5px;height:1.3px;background:#fff"></div>
  <div style="position:absolute;left:300px;top:0;width:37px;height:70px;background:linear-gradient(90deg,rgba(0,0,0,0),rgba(0,0,0,.035))"></div>
  <div style="position:absolute;left:0;top:69.6px;width:139px;height:1.4px;background:#555"></div>
  <div style="position:absolute;left:210.5px;top:69.6px;width:126px;height:1.4px;background:#555"></div>
  <div style="position:absolute;left:336px;top:70px;width:1px;height:224px;background:#dedede"></div>
  <div class="mi" style="left:28.6px;top:95px">Home</div>
  <div class="mi" style="left:28.6px;top:143.6px">About Us</div>
  <div class="mi" style="left:28.6px;top:192.7px;letter-spacing:0.1px">Contact Us</div>
  <div style="position:absolute;left:12.4px;top:230.2px;width:311.6px;height:38.4px;border:2px solid #006ab1;border-radius:8px;background:#b7d3ed"></div>
  <div class="mi" style="left:28.6px;top:241.8px">All Products</div>
  <div style="position:absolute;left:157.2px;top:240.4px;width:18px;height:18px;border-radius:50%;background:#f44336"></div>
  <svg style="position:absolute;left:36px;top:296px" width="20" height="20" viewBox="0 0 20 20">
    <path d="M10,17.2 L3.8,10 C1.6,7.3 2.3,3.3 5.4,2.8 C7.4,2.5 9,3.8 10,5.5 C11,3.8 12.6,2.5 14.6,2.8 C17.7,3.3 18.4,7.3 16.2,10 Z" fill="none" stroke="#111" stroke-width="1.15" stroke-linejoin="round"/>
  </svg>
  <svg style="position:absolute;left:93px;top:296px" width="20" height="20" viewBox="0 0 20 20">
    <path d="M1.3,2.2 L3.3,2.2 L5.3,11 L15.3,11 L16.8,4.3 L4.1,4.3" fill="none" stroke="#111" stroke-width="1.15" stroke-linejoin="round"/>
    <circle cx="6.3" cy="15.4" r="1.55" fill="none" stroke="#111" stroke-width="1.05"/>
    <circle cx="14" cy="15.4" r="1.55" fill="none" stroke="#111" stroke-width="1.05"/>
  </svg>
  <svg style="position:absolute;left:150px;top:296px" width="18" height="20" viewBox="0 0 18 20">
    <circle cx="8.4" cy="5.2" r="2.6" fill="none" stroke="#111" stroke-width="1.1"/>
    <path d="M1.9,16.8 C1.9,12.9 4.5,10.9 8.4,10.9 C12.3,10.9 14.9,12.9 14.9,16.8 Z" fill="none" stroke="#111" stroke-width="1.15" stroke-linejoin="round"/>
  </svg>
  <div style="position:absolute;left:337px;top:0;width:9px;height:625px;background:#fafafa"></div>
  <svg style="position:absolute;left:337px;top:2px" width="9" height="6" viewBox="0 0 9 6"><path d="M1.5,5 L4.5,2 L7.5,5 Z" fill="#777"/></svg>
  <div style="position:absolute;left:338.3px;top:10.8px;width:5.8px;height:74.5px;border-radius:3px;background:#8a8a8a"></div>
</div>

<!-- BOTTOM BAR -->
<div style="position:absolute;left:0;top:914px;width:1826px;height:15px;background:#f3f3f3;border-top:1px solid #cfcfcf"></div>
<div style="position:absolute;left:182px;top:915px;width:68px;height:14px;background:#fff"></div>
<div style="position:absolute;left:427px;top:925px;width:29px;height:14px;border-radius:7px;background:#d6d6d6"></div>
</body></html>
